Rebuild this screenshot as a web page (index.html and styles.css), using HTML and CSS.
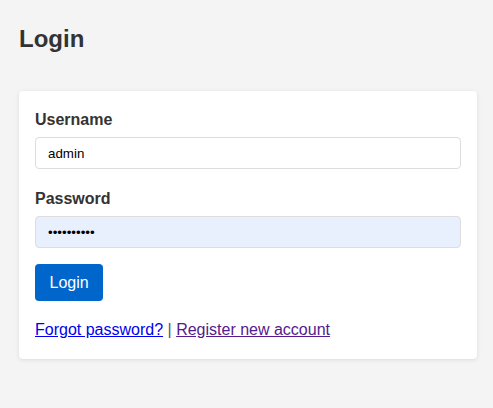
FILE: index.html
```html
<!DOCTYPE html>
<html lang="en">
<head>
<meta charset="utf-8">
<title>Login</title>
<link rel="stylesheet" href="styles.css">
</head>
<body>
  <h1 class="page-title">Login</h1>
  <form class="card login-form">
    <div class="field">
      <label class="field-label" for="username">Username</label>
      <input class="field-input" id="username" type="text" value="admin">
    </div>
    <div class="field">
      <label class="field-label" for="password">Password</label>
      <input class="field-input field-input--filled" id="password" type="password" value="secret1234">
    </div>
    <button class="btn-primary" type="button">Login</button>
    <p class="form-links">
      <a class="link" href="#forgot">Forgot password?</a> <span class="sep">|</span> <a class="link link--visited" href="#register">Register new account</a>
    </p>
  </form>
</body>
</html>
```

FILE: styles.css
```css
html, body {
  margin: 0;
  background: #f4f4f4;
}

body {
  font-family: "Liberation Sans", Arial, sans-serif;
  color: #333;
  padding: 25px 16px 40px 19px;
}

.page-title {
  margin: 0 0 39px;
  font-size: 24px;
  font-weight: bold;
  color: #333;
  line-height: 27px;
}

.card {
  background: #fff;
  border-radius: 4px;
  box-shadow: 0 1px 4px rgba(0, 0, 0, 0.1);
  padding: 20px 16px;
}

.field {
  margin-bottom: 21px;
}

.field-label {
  display: block;
  font-size: 16px;
  font-weight: bold;
  line-height: 18px;
  margin-bottom: 8px;
  color: #333;
}

.field-input {
  display: block;
  box-sizing: border-box;
  width: 100%;
  height: 32px;
  padding: 0 12px;
  border: 1px solid #ddd;
  border-radius: 4px;
  background: #fff;
  font-family: "Liberation Sans", Arial, sans-serif;
  font-size: 13.33px;
  color: #000;
  outline: none;
}

.field-input--filled {
  background: #e8f0fe;
}

.btn-primary {
  display: block;
  margin-top: -5px;
  border: none;
  border-radius: 4px;
  background: #0066cc;
  color: #fff;
  font-family: "Liberation Sans", Arial, sans-serif;
  font-size: 16px;
  line-height: 17px;
  padding: 10px 14.5px;
  cursor: pointer;
}

.form-links {
  margin: 20px 0 0;
  font-size: 16px;
  line-height: 18px;
  color: #555;
}

.link {
  color: #0000ee;
}

.link--visited {
  color: #551a8b;
}
```
